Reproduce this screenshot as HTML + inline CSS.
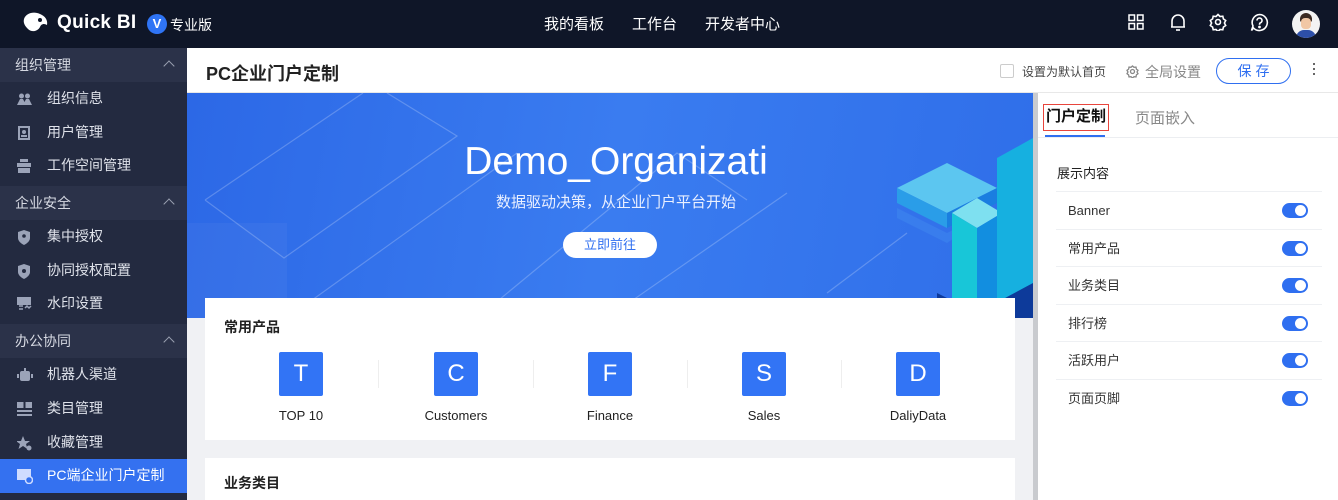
<!DOCTYPE html>
<html><head><meta charset="utf-8"><style>
*{margin:0;padding:0;box-sizing:border-box}
body{width:1338px;height:500px;overflow:hidden;font-family:"Liberation Sans","Noto Sans CJK SC",sans-serif;background:#f0f1f4;position:relative}
.hdr{position:absolute;left:0;top:0;width:1338px;height:48px;background:#0f1628;color:#fff}
.side{position:absolute;left:0;top:48px;width:187px;height:452px;background:#232a40}
.grp{height:34px;background:#2b3249;color:#d6d9e2;font-size:14px;line-height:34px;padding-left:15px;position:relative}
.grp:after{content:"";position:absolute;right:14px;top:14px;width:7px;height:7px;border-left:1.5px solid #9aa0b0;border-top:1.5px solid #9aa0b0;transform:rotate(45deg)}
.it{height:33.7px;line-height:33.7px;color:#dfe2ea;font-size:14px;padding-left:47px;position:relative}
.it svg{position:absolute;left:17px;top:10px}
.it.act{background:#3471f0;color:#fff}
.title{position:absolute;left:187px;top:48px;width:1151px;height:45px;background:#fff;border-bottom:1px solid #e8e8e8}
.banner{position:absolute;left:187px;top:93px;width:846px;height:225px;background:linear-gradient(100deg,#2c68e6,#3a7cf0 50%,#2f6ee9);overflow:hidden}
.card{position:absolute;left:205px;background:#fff;width:810px}
.prod{position:absolute;top:54px;width:100px;text-align:center;font-size:13px;color:#222}
.prod b{display:block;margin:0 auto 12px;width:44px;height:44px;background:#3274f5;border-radius:2px;color:#fff;font-weight:normal;font-size:24px;line-height:44px}
.sep{position:absolute;top:62px;width:1px;height:28px;background:#eee}
.right{position:absolute;left:1038px;top:93px;width:300px;height:407px;background:#fff}
.row{position:absolute;left:18px;width:266px;height:37.5px;border-top:1px solid #eef0f3;font-size:13px;color:#333;line-height:37px;padding-left:12px}
.tg{position:absolute;right:14px;top:11px;width:26px;height:15px;border-radius:8px;background:#2f6ff0}
.tg:after{content:"";position:absolute;right:2px;top:2px;width:11px;height:11px;border-radius:50%;background:#fff}
</style></head><body>
<div class="hdr">
 <svg style="position:absolute;left:22px;top:11px" width="28" height="24" viewBox="0 0 28 24"><path d="M2 8 C4 2 12 0 18 3 C23 5 26 9 25 14 C22 12 19 13 18 16 C16 20 10 22 6 18 C3 15 1 12 2 8Z" fill="#fff"/><circle cx="18" cy="9" r="2" fill="#0f1628"/></svg>
 <div style="position:absolute;left:57px;top:12px;font-size:19px;font-weight:bold;letter-spacing:0.3px">Quick BI</div>
 <div style="position:absolute;left:147px;top:14px;width:20px;height:20px;border-radius:50%;background:#2f74f5;font-size:13px;font-weight:bold;text-align:center;line-height:20px">V</div>
 <div style="position:absolute;left:170px;top:15px;font-size:14px">专业版</div>
 <div style="position:absolute;left:544px;top:13px;font-size:15px">我的看板<span style="margin-left:28px">工作台</span><span style="margin-left:28px">开发者中心</span></div>
 <svg style="position:absolute;left:1128px;top:14px" width="16" height="16" fill="none" stroke="#fff" stroke-width="1.5"><rect x="1" y="1" width="5.5" height="5.5"/><rect x="9.5" y="1" width="5.5" height="5.5"/><rect x="1" y="9.5" width="5.5" height="5.5"/><rect x="9.5" y="9.5" width="5.5" height="5.5"/></svg>
 <svg style="position:absolute;left:1169px;top:12px" width="18" height="20" fill="none" stroke="#fff" stroke-width="1.6"><path d="M3 15 V9 a6 6 0 0 1 12 0 V15 H2 H16"/><path d="M7 18 h4"/></svg>
 <svg style="position:absolute;left:1209px;top:13px" width="18" height="18" fill="none" stroke="#fff" stroke-width="1.6"><circle cx="9" cy="9" r="2.5"/><path d="M9 1.5 l2 2 2.8-.3 .6 2.7 2.3 1.6 -1.3 2.5 1.3 2.5 -2.3 1.6 -.6 2.7 -2.8-.3 -2 2 -2-2 -2.8.3 -.6-2.7 -2.3-1.6 1.3-2.5 -1.3-2.5 2.3-1.6 .6-2.7 2.8.3z"/></svg>
 <svg style="position:absolute;left:1250px;top:13px" width="19" height="19" fill="none" stroke="#fff" stroke-width="1.6"><path d="M9.5 1.5 a8 8 0 1 1 -6 13.5 L1.5 17.5 L3 13 A8 8 0 0 1 9.5 1.5z"/><path d="M7 7.5 a2.5 2.5 0 1 1 3.5 2.3 c-1 .4 -1 1 -1 2"/><circle cx="9.5" cy="14" r=".6" fill="#fff"/></svg>
 <div style="position:absolute;left:1292px;top:10px;width:28px;height:28px;border-radius:50%;background:#f3f3f3;overflow:hidden"><div style="position:absolute;left:8px;top:3px;width:12px;height:9px;background:#3b2a22;border-radius:6px 6px 2px 2px"></div><div style="position:absolute;left:9px;top:8px;width:10px;height:11px;background:#f1c7a5;border-radius:4px"></div><div style="position:absolute;left:4px;top:20px;width:20px;height:10px;background:#2d4fa8;border-radius:8px 8px 0 0"></div></div>
</div>
<div class="side">
 <div class="grp">组织管理</div>
 <div class="it"><svg width="15" height="14" fill="#9ba3b8"><circle cx="4.5" cy="4" r="2.5"/><circle cx="10.5" cy="4" r="2.5"/><path d="M0 13 L3 7 H6 L7.5 10 L9 7 H12 L15 13Z"/></svg>组织信息</div>
 <div class="it"><svg width="14" height="14" fill="#9ba3b8"><path d="M1 0H13V14H1Z M3 2V12H11V2Z" fill-rule="evenodd"/><circle cx="7" cy="6" r="2"/><rect x="4" y="9" width="6" height="2"/></svg>用户管理</div>
 <div class="it"><svg width="14" height="14" fill="#9ba3b8"><rect x="3" y="0" width="8" height="3"/><rect x="0" y="4" width="14" height="4"/><rect x="1" y="9" width="12" height="5"/></svg>工作空间管理</div>
 <div class="grp" style="margin-top:3px">企业安全</div>
 <div class="it"><svg width="14" height="15" fill="#9ba3b8"><path d="M1 2 L7 0 L13 2 V8 C13 11 10 13.5 7 15 C4 13.5 1 11 1 8Z"/><circle cx="7" cy="6" r="1.8" fill="#232a40"/></svg>集中授权</div>
 <div class="it"><svg width="14" height="15" fill="#9ba3b8"><path d="M1 2 L7 0 L13 2 V8 C13 11 10 13.5 7 15 C4 13.5 1 11 1 8Z"/><circle cx="7" cy="7" r="2" fill="#232a40"/></svg>协同授权配置</div>
 <div class="it"><svg width="15" height="14" fill="#9ba3b8"><path d="M0 0H14V8H0Z"/><path d="M2 9 H6 M8 11 l2 -2 2 2 2 -2 M2 12H6" stroke="#9ba3b8" stroke-width="1.5" fill="none"/></svg>水印设置</div>
 <div class="grp" style="margin-top:3px">办公协同</div>
 <div class="it"><svg width="16" height="14" fill="#9ba3b8"><rect x="7" y="0" width="2" height="3"/><rect x="3" y="3" width="10" height="10" rx="2"/><rect x="0" y="6" width="2" height="4"/><rect x="14" y="6" width="2" height="4"/></svg>机器人渠道</div>
 <div class="it"><svg width="15" height="14" fill="#9ba3b8"><rect x="0" y="0" width="6.5" height="6"/><rect x="8.5" y="0" width="6.5" height="6"/><rect x="0" y="8" width="15" height="2"/><rect x="0" y="12" width="15" height="2"/></svg>类目管理</div>
 <div class="it"><svg width="15" height="15" fill="#9ba3b8"><path d="M6 0 L8 5 H13 L9 8 L10.5 13 L6 10 L1.5 13 L3 8 L-1 5 H4Z"/><circle cx="12" cy="12" r="2.5"/></svg>收藏管理</div>
 <div class="it act"><svg width="16" height="15" fill="#cfdcff"><rect x="0" y="0" width="14" height="11"/><circle cx="12" cy="11" r="3.5" fill="#3471f0" stroke="#cfdcff" stroke-width="1.5"/></svg>PC端企业门户定制</div>
</div>
<div class="title">
 <div style="position:absolute;left:19px;top:12px;font-size:18px;color:#222;font-weight:600">PC企业门户定制</div>
 <div style="position:absolute;left:813px;top:16px;width:14px;height:14px;border:1px solid #ccc;border-radius:2px"></div>
 <div style="position:absolute;left:835px;top:15px;font-size:12px;color:#444">设置为默认首页</div>
 <svg style="position:absolute;left:939px;top:17px" width="13" height="13" fill="none" stroke="#888" stroke-width="1.3"><circle cx="6.5" cy="6.5" r="2"/><path d="M6.5 1 l1.5 1.3 2 -.2 .4 2 1.6 1.2 -1 1.7 1 1.7 -1.6 1.2 -.4 2 -2 -.2 -1.5 1.3 -1.5 -1.3 -2 .2 -.4 -2 -1.6 -1.2 1 -1.7 -1 -1.7 1.6 -1.2 .4 -2 2 .2z"/></svg>
 <div style="position:absolute;left:958px;top:14px;font-size:14px;color:#888">全局设置</div>
 <div style="position:absolute;left:1029px;top:10px;width:75px;height:26px;border:1px solid #2f6ff0;border-radius:13px;color:#2f6ff0;font-size:14px;text-align:center;line-height:24px;letter-spacing:4px;padding-left:4px">保存</div>
 <div style="position:absolute;left:1126px;top:15px;width:2px;height:2px;background:#666;box-shadow:0 5px 0 #666,0 10px 0 #666"></div>
</div>
<div class="banner">
 <svg width="846" height="225" style="position:absolute;left:0;top:0" fill="none" stroke="rgba(255,255,255,.22)" stroke-width="1.2"><path d="M18 107 L176 0 M18 107 L97 165 L270 43 L200 0"/><path d="M100 225 L330 60 M290 225 L490 60 L560 107"/><path d="M420 225 L600 100 M640 200 L720 140" /></svg>
 <div style="position:absolute;left:0;top:130px;width:100px;height:95px;background:rgba(255,255,255,.04)"></div>
 <div style="position:absolute;left:0;width:846px;top:47px;text-align:center;padding-left:12px;color:#fff;font-size:39px">Demo_Organizati</div>
 <div style="position:absolute;left:0;width:846px;top:98px;text-align:center;padding-left:12px;color:#eaf0ff;font-size:15px">数据驱动决策，从企业门户平台开始</div>
 <div style="position:absolute;left:376px;top:139px;width:94px;height:26px;border-radius:13px;background:#fff;color:#2f6ff0;font-size:13px;text-align:center;line-height:26px">立即前往</div>
 <svg style="position:absolute;left:700px;top:20px" width="146" height="205"><polygon points="10,75 60,50 110,75 60,100" fill="#5cc6f0"/><polygon points="10,75 60,100 60,115 10,90" fill="#2a9de8"/><polygon points="60,100 110,75 110,90 60,115" fill="#1a7ee0"/><polygon points="10,95 60,120 110,95 60,130 10,105" fill="#3e86ee" opacity=".6"/><polygon points="65,100 90,85 115,100 90,115" fill="#7ee0f0"/><polygon points="65,100 90,115 90,205 65,205" fill="#18c6d8"/><polygon points="90,115 115,100 115,205 90,205" fill="#128ee0"/><polygon points="110,45 146,25 146,205 110,205" fill="#16b0e0"/><polygon points="50,180 90,200 146,170 146,205 50,205" fill="#0d3a9a"/></svg>
</div>
<div style="position:absolute;left:1033px;top:93px;width:5px;height:407px;background:#c9cbcf"></div>
<div class="card" style="top:298px;height:142px">
 <div style="position:absolute;left:19px;top:19px;font-size:14px;color:#222;font-weight:600">常用产品</div>
 <div class="prod" style="left:46px"><b>T</b>TOP 10</div>
 <div class="sep" style="left:173px"></div>
 <div class="prod" style="left:201px"><b>C</b>Customers</div>
 <div class="sep" style="left:328px"></div>
 <div class="prod" style="left:355px"><b>F</b>Finance</div>
 <div class="sep" style="left:482px"></div>
 <div class="prod" style="left:509px"><b>S</b>Sales</div>
 <div class="sep" style="left:636px"></div>
 <div class="prod" style="left:663px"><b>D</b>DaliyData</div>
</div>
<div class="card" style="top:458px;height:42px"><div style="position:absolute;left:19px;top:15px;font-size:14px;color:#222;font-weight:600">业务类目</div></div>
<div class="right">
 <div style="position:absolute;left:5px;top:11px;padding:0 2px;height:27px;border:1.5px solid #e8453c;font-size:15px;color:#111;line-height:24px;font-weight:600">门户定制</div>
 <div style="position:absolute;left:7px;top:42px;width:60px;height:2px;background:#2f6ff0"></div>
 <div style="position:absolute;left:97px;top:14px;font-size:15px;color:#888">页面嵌入</div>
 <div style="position:absolute;left:0;top:44px;width:300px;height:1px;background:#eceef1"></div>
 <div style="position:absolute;left:19px;top:70px;font-size:13px;color:#222">展示内容</div>
 <div class="row" style="top:98px">Banner<span class="tg"></span></div>
 <div class="row" style="top:135.5px">常用产品<span class="tg"></span></div>
 <div class="row" style="top:173px">业务类目<span class="tg"></span></div>
 <div class="row" style="top:210.5px">排行榜<span class="tg"></span></div>
 <div class="row" style="top:248px">活跃用户<span class="tg"></span></div>
 <div class="row" style="top:285.5px">页面页脚<span class="tg"></span></div>
</div>
</body></html>
